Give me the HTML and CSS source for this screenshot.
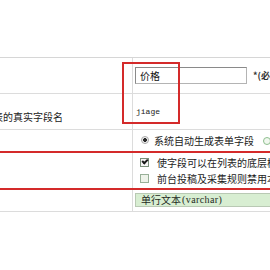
FILE: index.html
```html
<!DOCTYPE html>
<html lang="zh-CN">
<head>
<meta charset="utf-8">
<title>字段设置</title>
<link rel="stylesheet" href="styles.css">
</head>
<body>
<div class="page">
  <div class="top"></div>
  <div class="form">
    <div class="row r-tall">
      <div class="lab"></div>
      <div class="val v-name">
        <span class="input">价格</span>
        <span class="req">*(必填项)</span>
      </div>
    </div>
    <div class="row r-tall">
      <div class="lab lab-field">表的真实字段名</div>
      <div class="val v-field"><span class="mono">jiage</span></div>
    </div>
    <div class="row r-short no-line">
      <div class="lab"></div>
      <div class="val v-radio">
        <span class="radio on"></span>
        <span class="rtext">系统自动生成表单字段</span>
        <span class="radio alt"></span>
      </div>
    </div>
    <div class="group">
      <div class="row r-check">
        <div class="lab"></div>
        <div class="val v-check">
          <div class="cline"><span class="cbox on"></span><span>使字段可以在列表的底层模板中调用</span></div>
          <div class="cline"><span class="cbox"></span><span>前台投稿及采集规则禁用本字段</span></div>
        </div>
      </div>
    </div>
    <div class="row r-short">
      <div class="lab"></div>
      <div class="val v-type">
        <span class="select">单行文本<span class="latin">(varchar)</span></span>
      </div>
    </div>
    <div class="mark"></div>
  </div>
</div>
</body>
</html>
```
FILE: styles.css
```css
html, body {
  margin: 0;
  padding: 0;
  background: #ffffff;
  overflow: hidden;
}
body {
  font-family: "Noto Sans CJK SC", "Noto Sans", sans-serif;
  font-size: 10px;
  color: #222222;
}
.page {
  width: 420px;
}
.top {
  height: 57px;
}
.form {
  position: relative;
  border-top: 1px solid #d6d6d6;
}
.row {
  display: grid;
  grid-template-columns: 133px 1fr;
  border-bottom: 1px solid #dcdcdc;
}
.row.no-line {
  border-bottom: none;
}
.r-tall {
  height: 35px;
}
.r-short {
  height: 21px;
}
.lab {
  border-right: 1px solid #dcdcdc;
  white-space: nowrap;
  overflow: visible;
}
.lab-field {
  display: flex;
  align-items: flex-end;
  padding-bottom: 5px;
  text-indent: -7px;
  line-height: 14px;
}
.val {
  display: flex;
  align-items: center;
  white-space: nowrap;
  overflow: hidden;
}
.v-name {
  padding-left: 2px;
}
.input {
  box-sizing: border-box;
  width: 112px;
  height: 17px;
  border: 1px solid #b4b4b4;
  border-top-color: #8a8a8a;
  border-left-color: #8a8a8a;
  padding-left: 4px;
  line-height: 15px;
  font-size: 10px;
  color: #111;
}
.req {
  margin-left: 6px;
  font-size: 9px;
  font-weight: bold;
  color: #333;
}
.v-field {
  padding-left: 3px;
  padding-bottom: 1px;
}
.mono {
  font-family: "Liberation Mono", "DejaVu Sans Mono", monospace;
  font-size: 8px;
  color: #222;
}
.v-radio {
  padding-left: 8px;
}
.radio {
  box-sizing: border-box;
  display: inline-block;
  width: 8px;
  height: 8px;
  border-radius: 50%;
  border: 1px solid #a8a8a8;
  background: #f4f4f4;
  flex: none;
}
.radio.on {
  background: radial-gradient(circle, #2a2a2a 0 1.6px, #f2f2f2 2.2px);
  margin-top: -2px;
}
.radio.alt {
  margin-left: 9px;
  border-color: #8fbf8f;
  background: #f1f8ef;
}
.rtext {
  margin-left: 5px;
}
.group {
  border-top: 2px solid #d42a2a;
  border-bottom: 2px solid #d42a2a;
}
.r-check {
  border-bottom: none;
  height: 35px;
}
.v-check {
  flex-direction: column;
  align-items: flex-start;
  justify-content: flex-start;
  padding-left: 7px;
  padding-top: 1px;
}
.cline {
  display: flex;
  align-items: center;
  height: 16px;
}
.cbox {
  box-sizing: border-box;
  width: 9px;
  height: 9px;
  border: 1px solid #98b098;
  background: #eef3ea;
  margin-right: 8px;
  position: relative;
  flex: none;
}
.cbox.on {
  border-color: #7a8f7a;
  background: #f6f6f6;
}
.cbox.on::after {
  content: "";
  position: absolute;
  left: 1px;
  top: 0px;
  width: 4px;
  height: 2px;
  border-left: 2px solid #1a1a1a;
  border-bottom: 2px solid #1a1a1a;
  transform: rotate(-45deg);
  transform-origin: center;
}
.v-type {
  padding-left: 2px;
}
.select {
  box-sizing: border-box;
  display: flex;
  align-items: center;
  width: 300px;
  height: 14px;
  margin-top: -2px;
  background: #d8eed2;
  border: 1px solid #b9c9b4;
  padding-left: 5px;
  font-size: 10px;
  color: #1f2a1f;
}
.latin {
  font-family: "Liberation Serif", "DejaVu Serif", serif;
  letter-spacing: 0.4px;
  margin-left: 1px;
}
.mark {
  position: absolute;
  left: 122px;
  top: 4px;
  width: 58px;
  height: 62px;
  box-sizing: border-box;
  border: 2px solid #d42a2a;
}
```
